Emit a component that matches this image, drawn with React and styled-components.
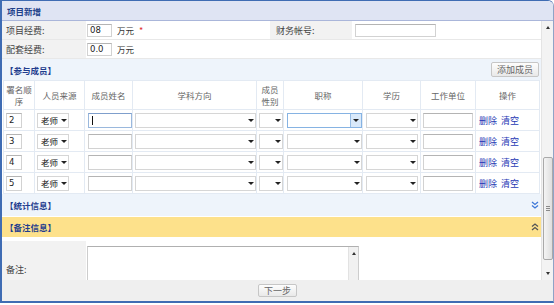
import React from 'react';
import styled, { createGlobalStyle } from 'styled-components';

const Global = createGlobalStyle`
  html, body { margin: 0; padding: 0; background: #fff; }
  body {
    font-family: "Noto Sans CJK SC", "Noto Sans", sans-serif;
    font-size: 9px;
    color: #333;
  }
  * { box-sizing: border-box; }
`;

const Window = styled.div`
  width: 554px;
  height: 303px;
  border: 2px solid #3f6cb3;
  border-top-width: 1px;
  border-right: 1px solid #8fa3c7;
  border-top-right-radius: 6px;
  display: flex;
  flex-direction: column;
  overflow: hidden;
  background: #fff;
`;

const TitleBar = styled.div`
  flex: none;
  height: 20px;
  background: #dfe4f3;
  border-bottom: 1px solid #aab6da;
  display: flex;
  align-items: center;
  padding-left: 5px;
  font-weight: bold;
  font-size: 8.5px;
  color: #21408a;
`;

const Body = styled.div`
  flex: 1;
  display: flex;
  min-height: 0;
`;

const Content = styled.div`
  width: 539px;
  flex: none;
  overflow: hidden;
  display: flex;
  flex-direction: column;
`;

const FormRow = styled.div`
  flex: none;
  display: flex;
  height: 19px;
  border-bottom: 1px solid #e8e8e8;
`;

const LabelCell = styled.div`
  flex: none;
  width: ${p => p.w}px;
  background: #f2f2f2;
  display: flex;
  align-items: center;
  padding-left: ${p => p.pl || 4}px;
  color: #444;
  font-size: 9px;
`;

const ValueCell = styled.div`
  flex: ${p => (p.w ? 'none' : '1')};
  width: ${p => (p.w ? `${p.w}px` : 'auto')};
  display: flex;
  align-items: center;
  padding-left: ${p => p.pl || 1}px;
  gap: 5px;
`;

const Field = styled.div`
  flex: none;
  width: ${p => p.w}px;
  height: ${p => p.h || 15}px;
  border: 1px solid ${p => (p.focus ? '#9ab8dd' : '#d2d2d2')};
  border-top-color: ${p => (p.focus ? '#7f9fcc' : '#b4b4b4')};
  background: #fff;
  display: flex;
  align-items: center;
  padding-left: 2px;
  font-size: 8.5px;
  color: #222;
  font-family: "DejaVu Sans", sans-serif;
`;

const Caret = styled.span`
  width: 1px;
  height: 9px;
  background: #111;
  margin-left: 1px;
`;

const Unit = styled.span`
  color: #333;
  font-size: 8.5px;
`;

const Req = styled.span`
  color: #e03030;
  font-size: 9px;
`;

const Band = styled.div`
  flex: none;
  height: ${p => p.h}px;
  background: ${p => (p.yellow ? '#fde18b' : '#eef4fb')};
  margin-bottom: ${p => p.mb || 0}px;
  display: flex;
  align-items: center;
  justify-content: space-between;
  padding: 0 2px 0 3px;
`;

const BandTitle = styled.span`
  font-weight: bold;
  font-size: 8.5px;
  color: #1f3d8e;
`;

const SmallButton = styled.button`
  height: ${p => p.h || 15}px;
  padding: 0 ${p => p.px || 5}px;
  border: 1px solid #c6c6c6;
  border-radius: 2px;
  background: linear-gradient(#fdfdfd, #e9e9e9);
  font-family: "Noto Sans CJK SC", sans-serif;
  font-size: 9px;
  color: #666;
  line-height: 1;
  display: flex;
  align-items: center;
`;

const Table = styled.div`
  flex: none;
  margin: 0 1px;
  padding: 1px;
  background: #e3eaf3;
  display: grid;
  grid-template-columns: 30px 49px 47px 123px 26px 78px 57px 54px 63px;
  grid-auto-rows: 20px;
  grid-template-rows: 28px;
  gap: 1px;
`;

const HeadCell = styled.div`
  background: #fff;
  display: flex;
  flex-direction: column;
  align-items: center;
  justify-content: center;
  text-align: center;
  color: #666;
  font-size: 8.5px;
  white-space: nowrap;
`;

const HeadLine = styled.span`
  display: block;
  height: 12px;
  line-height: 12px;
`;

const Cell = styled.div`
  background: #fff;
  display: flex;
  align-items: center;
  padding-left: ${p => p.pl ?? 2}px;
  gap: 4px;
`;

const SelectBox = styled.div`
  flex: none;
  width: ${p => p.w}px;
  height: 15px;
  border: 1px solid ${p => (p.active ? '#86b3e3' : '#d6d6d6')};
  background: #fff;
  display: flex;
  align-items: center;
  justify-content: space-between;
  padding-left: 3px;
  font-size: 8.5px;
  color: #111;
  white-space: nowrap;
  overflow: hidden;
`;

const SelectArrow = styled.span`
  flex: none;
  width: ${p => (p.active ? 11 : 10)}px;
  height: 100%;
  display: flex;
  align-items: center;
  justify-content: center;
  background: ${p => (p.active ? '#d9e9fa' : 'transparent')};
  border-left: 1px solid ${p => (p.active ? '#98bde5' : 'transparent')};
  &::after {
    content: '';
    border-left: 3px solid transparent;
    border-right: 3px solid transparent;
    border-top: 3px solid #222;
  }
`;

const LinkText = styled.a`
  color: #2638b4;
  font-size: 9px;
  text-decoration: none;
  cursor: pointer;
`;

const RemarkArea = styled.div`
  flex: none;
  padding-top: 4px;
  display: flex;
`;

const RemarkLabel = styled.div`
  flex: none;
  width: 84px;
  height: 56px;
  background: #f2f2f2;
  display: flex;
  align-items: center;
  padding-left: 4px;
  color: #444;
  font-size: 9px;
`;

const RemarkValue = styled.div`
  flex: 1;
  padding: 5px 0 0 1px;
`;

const TextArea = styled.div`
  width: 272px;
  height: 46px;
  border: 1px solid #cdcdcd;
  border-top-color: #b0b0b0;
  background: #fff;
  display: flex;
  justify-content: flex-end;
`;

const MiniScroll = styled.div`
  width: 10px;
  height: 100%;
  background: #f1f1f1;
  border-left: 1px solid #e2e2e2;
  display: flex;
  justify-content: center;
  padding-top: 5px;
`;

const UpTri = styled.span`
  width: 0;
  height: 0;
  border-left: 2.5px solid transparent;
  border-right: 2.5px solid transparent;
  border-bottom: 3px solid #333;
`;

const DownTri = styled.span`
  width: 0;
  height: 0;
  border-left: 2.5px solid transparent;
  border-right: 2.5px solid transparent;
  border-top: 3px solid #333;
`;

const Scrollbar = styled.div`
  flex: none;
  width: 12px;
  background: #f3f3f3;
  border-left: 1px solid #e4e4e4;
  display: flex;
  flex-direction: column;
  align-items: center;
`;

const ScrollBtn = styled.div`
  flex: none;
  height: ${p => p.h}px;
  display: flex;
  align-items: center;
  justify-content: center;
`;

const Track = styled.div`
  flex: 1;
  width: 100%;
  display: flex;
  flex-direction: column;
  align-items: center;
`;

const Thumb = styled.div`
  margin-top: 124px;
  width: 10px;
  height: 103px;
  border: 1px solid #a9a9a9;
  border-radius: 2px;
  background: linear-gradient(90deg, #f4f4f4, #dedede);
  display: flex;
  flex-direction: column;
  align-items: center;
  justify-content: center;
  gap: 1px;
`;

const Grip = styled.span`
  width: 4px;
  height: 1px;
  background: #8a8a8a;
`;

const Footer = styled.div`
  flex: none;
  height: 21px;
  background: #efefef;
  display: flex;
  align-items: center;
  justify-content: center;
`;

const Chevrons = ({ dir, color }) => (
  <svg width="8" height="8" viewBox="0 0 8 8" fill="none" stroke={color} strokeWidth="1.3">
    {dir === 'down' ? (
      <>
        <polyline points="1,1 4,3.5 7,1" />
        <polyline points="1,4.5 4,7 7,4.5" />
      </>
    ) : (
      <>
        <polyline points="1,3.5 4,1 7,3.5" />
        <polyline points="1,7 4,4.5 7,7" />
      </>
    )}
  </svg>
);

const Select = ({ w, text, active }) => (
  <SelectBox w={w} active={active}>
    <span>{text}</span>
    <SelectArrow active={active} />
  </SelectBox>
);

const headers = [
  ['署名顺', '序'],
  ['人员来源'],
  ['成员姓名'],
  ['学科方向'],
  ['成员', '性别'],
  ['职称'],
  ['学历'],
  ['工作单位'],
  ['操作'],
];

const rows = ['2', '3', '4', '5'];

export default function App() {
  return (
    <>
      <Global />
      <Window>
        <TitleBar>项目新增</TitleBar>
        <Body>
          <Content>
            <FormRow>
              <LabelCell w={84}>项目经费:</LabelCell>
              <ValueCell w={184}>
                <Field w={25} h={13}>08</Field>
                <Unit>万元</Unit>
                <Req>*</Req>
              </ValueCell>
              <LabelCell w={82} pl={6}>财务帐号:</LabelCell>
              <ValueCell pl={3}>
                <Field w={81} h={13} />
              </ValueCell>
            </FormRow>
            <FormRow>
              <LabelCell w={84}>配套经费:</LabelCell>
              <ValueCell>
                <Field w={25} h={13}>0.0</Field>
                <Unit>万元</Unit>
              </ValueCell>
            </FormRow>
            <Band h={21}>
              <BandTitle>【参与成员】</BandTitle>
              <SmallButton>添加成员</SmallButton>
            </Band>
            <Table>
              {headers.map((lines, i) => (
                <HeadCell key={i}>
                  {lines.map(l => (
                    <HeadLine key={l}>{l}</HeadLine>
                  ))}
                </HeadCell>
              ))}
              {rows.map((n, r) => (
                <React.Fragment key={n}>
                  <Cell><Field w={16}>{n}</Field></Cell>
                  <Cell><Select w={32} text="老师" /></Cell>
                  <Cell pl={3}>
                    <Field w={44} focus={r === 0}>{r === 0 && <Caret />}</Field>
                  </Cell>
                  <Cell><Select w={121} /></Cell>
                  <Cell><Select w={24} /></Cell>
                  <Cell pl={3}><Select w={75} active={r === 0} /></Cell>
                  <Cell pl={3}><Select w={52} /></Cell>
                  <Cell><Field w={50} /></Cell>
                  <Cell pl={3}>
                    <LinkText>删除</LinkText>
                    <LinkText>清空</LinkText>
                  </Cell>
                </React.Fragment>
              ))}
            </Table>
            <Band h={22} mb={1}>
              <BandTitle>【统计信息】</BandTitle>
              <Chevrons dir="down" color="#3f78d8" />
            </Band>
            <Band h={20} yellow>
              <BandTitle>【备注信息】</BandTitle>
              <Chevrons dir="up" color="#555" />
            </Band>
            <RemarkArea>
              <RemarkLabel>备注:</RemarkLabel>
              <RemarkValue>
                <TextArea>
                  <MiniScroll><UpTri /></MiniScroll>
                </TextArea>
              </RemarkValue>
            </RemarkArea>
          </Content>
          <Scrollbar>
            <ScrollBtn h={12}><UpTri /></ScrollBtn>
            <Track>
              <Thumb>
                <Grip /><Grip /><Grip />
              </Thumb>
            </Track>
            <ScrollBtn h={14}><DownTri /></ScrollBtn>
          </Scrollbar>
        </Body>
        <Footer>
          <SmallButton h={13} px={5}>下一步</SmallButton>
        </Footer>
      </Window>
    </>
  );
}
